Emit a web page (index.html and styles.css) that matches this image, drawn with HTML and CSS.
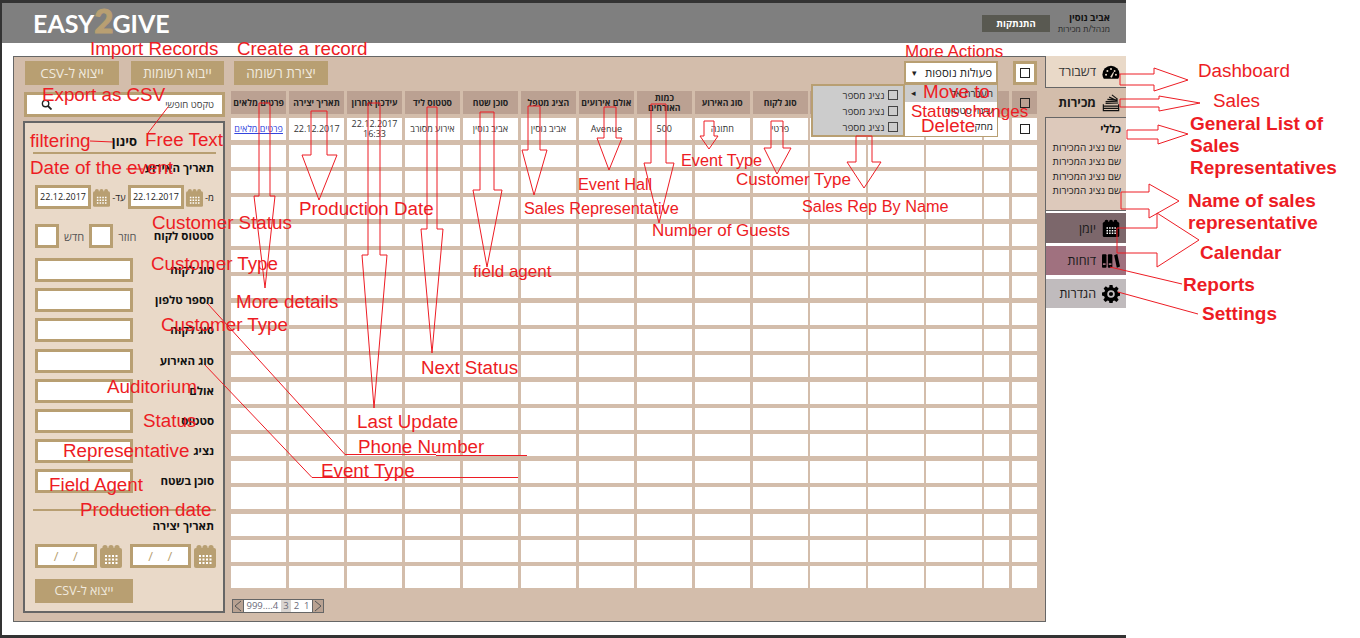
FILE: index.html
```html
<!DOCTYPE html>
<html lang="he">
<head>
<meta charset="utf-8">
<title>Easy2Give</title>
<link rel="stylesheet" href="styles.css">
</head>
<body>
<svg width="0" height="0" class="defs">
  <symbol id="cal" viewBox="0 0 22 24">
    <path d="M2 4h18a2 2 0 0 1 2 2v16a2 2 0 0 1-2 2H2a2 2 0 0 1-2-2V6a2 2 0 0 1 2-2z"/>
    <circle cx="5" cy="3.500" r="2.600"/><circle cx="11" cy="3.500" r="2.600"/><circle cx="17" cy="3.500" r="2.600"/>
    <path class="dots" d="M5 11h2v2H5zM8.500 11h2v2h-2zM12 11h2v2h-2zM15.500 11h2v2h-2zM5 14.500h2v2H5zM8.500 14.500h2v2h-2zM12 14.500h2v2h-2zM15.500 14.500h2v2h-2zM5 18h2v2H5zM8.500 18h2v2h-2zM12 18h2v2h-2zM15.500 18h2v2h-2z"/>
  </symbol>
</svg>

<div class="frame" dir="rtl">
  <header class="topbar">
    <div class="user">
      <b>אביב נוסין</b>
      <span>מנהל/ת מכירות</span>
    </div>
    <a class="logout">התנתקות</a>
    <div class="logo" dir="ltr">EASY<em>2</em>GIVE</div>
  </header>

  <div class="main">
    <nav class="nav">
      <a class="tab tab-dash">
        <svg class="tab-icon" viewBox="0 0 20 16"><path d="M10 1a9.500 9.500 0 0 0-9.500 9.500c0 2 .6 3.700 1.500 5h16c.9-1.300 1.500-3 1.500-5A9.500 9.500 0 0 0 10 1z"/><g fill="#e9d9c8"><circle cx="4.500" cy="11" r="1.100"/><circle cx="6" cy="6.800" r="1.100"/><circle cx="10" cy="4.600" r="1.100"/><circle cx="14" cy="6.800" r="1.100"/><circle cx="15.500" cy="11" r="1.100"/><path d="M9 13.500 12.500 8l.8.500L11 14.500z"/></g></svg>
        <span>דשבורד</span>
      </a>
      <a class="tab tab-sales">
        <svg class="tab-icon" viewBox="0 0 20 20" fill="none" stroke="#111" stroke-width="1.300"><path d="M1.500 11.500v7h17v-7M1.500 13.500h17M1.500 16h17"/><path d="M4 10.500 18 10M4 8.500 17.500 8M6 6 17 6.500M8 3.500l9 4M11 1l6.500 5"/></svg>
        <span>מכירות</span>
      </a>
      <div class="sublist">
        <b>כללי</b>
        <a>שם נציג המכירות</a>
        <a>שם נציג המכירות</a>
        <a>שם נציג המכירות</a>
        <a>שם נציג המכירות</a>
      </div>
      <a class="tab tab-cal">
        <svg class="tab-icon"><use href="#cal"/></svg>
        <span>יומן</span>
      </a>
      <a class="tab tab-rep">
        <svg class="tab-icon" viewBox="0 0 20 17"><rect x="0" y="1" width="5" height="15" rx="1"/><rect x="6.500" y="1" width="5" height="15" rx="1"/><path d="m13.500 2 3.500-1.300 3 14-3.500 1.300z"/><path d="M1 11h3v2H1zM7.500 11h3v2h-3z" fill="#a0717f"/></svg>
        <span>דוחות</span>
      </a>
      <a class="tab tab-set">
        <svg class="tab-icon" viewBox="0 0 20 20"><path fill-rule="evenodd" d="M8.300 0h3.400l.5 2.700 1.600.7 2.300-1.600 2.400 2.400-1.600 2.300.7 1.600 2.700.5v3.400l-2.700.5-.7 1.600 1.600 2.300-2.400 2.400-2.300-1.600-1.600.7-.5 2.700H8.300l-.5-2.700-1.600-.7-2.300 1.600-2.400-2.400 1.600-2.300-.7-1.600L0 11.700V8.300l2.700-.5.700-1.600-1.600-2.300 2.400-2.400 2.300 1.600 1.600-.7zM10 5.800a4.200 4.200 0 1 0 0 8.400 4.200 4.200 0 0 0 0-8.400z"/><circle cx="10" cy="10" r="2.300"/></svg>
        <span>הגדרות</span>
      </a>
    </nav>

    <section class="panel">
      <div class="toolbar">
        <div class="actions">
          <span class="check-box"><i class="check"></i></span>
          <div class="more">
            <div class="more-head"><span>פעולות נוספות</span><i class="caret">▾</i></div>
            <div class="more-menu">
              <div class="menu-item active"><span>העברה אל</span><i class="caret">◂</i></div>
              <div class="menu-item"><span>שינוי סטטוס</span></div>
              <div class="menu-item"><span>מחק</span></div>
              <div class="flyout">
                <label><i class="check"></i>נציג מספר</label>
                <label><i class="check"></i>נציג מספר</label>
                <label><i class="check"></i>נציג מספר</label>
              </div>
            </div>
          </div>
        </div>
        <div class="buttons">
          <a class="btn btn-new">יצירת רשומה</a>
          <a class="btn btn-import">ייבוא רשומות</a>
          <a class="btn">ייצוא ל-CSV</a>
        </div>
      </div>

      <div class="content">
        <div class="records">
          <div class="grid">
            <div class="th"><i class="check"></i></div>
            <div class="th"></div><div class="th"></div><div class="th"></div><div class="th"></div>
            <div class="th">סוג לקוח</div>
            <div class="th">סוג האירוע</div>
            <div class="th">כמות<br>האורחים</div>
            <div class="th">אולם אירועים</div>
            <div class="th">הציג מטפל</div>
            <div class="th">סוכן שטח</div>
            <div class="th">סטטוס ליד</div>
            <div class="th">עידכון אחרון</div>
            <div class="th">תאריך יצירה</div>
            <div class="th">פרטים מלאים</div>

            <div class="td"><i class="check"></i></div>
            <div class="td"></div><div class="td"></div><div class="td"></div><div class="td"></div>
            <div class="td">פרטי</div>
            <div class="td">חתונה</div>
            <div class="td">500</div>
            <div class="td">Avenue</div>
            <div class="td">אביב נוסין</div>
            <div class="td">אביב נוסין</div>
            <div class="td">אירוע מסורב</div>
            <div class="td">22.12.2017<br>16:33</div>
            <div class="td">22.12.2017</div>
            <div class="td"><a class="link">פרטים מלאים</a></div>

            <div class="td"></div><div class="td"></div><div class="td"></div><div class="td"></div><div class="td"></div><div class="td"></div><div class="td"></div><div class="td"></div><div class="td"></div><div class="td"></div><div class="td"></div><div class="td"></div><div class="td"></div><div class="td"></div><div class="td"></div>
            <div class="td"></div><div class="td"></div><div class="td"></div><div class="td"></div><div class="td"></div><div class="td"></div><div class="td"></div><div class="td"></div><div class="td"></div><div class="td"></div><div class="td"></div><div class="td"></div><div class="td"></div><div class="td"></div><div class="td"></div>
            <div class="td"></div><div class="td"></div><div class="td"></div><div class="td"></div><div class="td"></div><div class="td"></div><div class="td"></div><div class="td"></div><div class="td"></div><div class="td"></div><div class="td"></div><div class="td"></div><div class="td"></div><div class="td"></div><div class="td"></div>
            <div class="td"></div><div class="td"></div><div class="td"></div><div class="td"></div><div class="td"></div><div class="td"></div><div class="td"></div><div class="td"></div><div class="td"></div><div class="td"></div><div class="td"></div><div class="td"></div><div class="td"></div><div class="td"></div><div class="td"></div>
            <div class="td"></div><div class="td"></div><div class="td"></div><div class="td"></div><div class="td"></div><div class="td"></div><div class="td"></div><div class="td"></div><div class="td"></div><div class="td"></div><div class="td"></div><div class="td"></div><div class="td"></div><div class="td"></div><div class="td"></div>
            <div class="td"></div><div class="td"></div><div class="td"></div><div class="td"></div><div class="td"></div><div class="td"></div><div class="td"></div><div class="td"></div><div class="td"></div><div class="td"></div><div class="td"></div><div class="td"></div><div class="td"></div><div class="td"></div><div class="td"></div>
            <div class="td"></div><div class="td"></div><div class="td"></div><div class="td"></div><div class="td"></div><div class="td"></div><div class="td"></div><div class="td"></div><div class="td"></div><div class="td"></div><div class="td"></div><div class="td"></div><div class="td"></div><div class="td"></div><div class="td"></div>
            <div class="td"></div><div class="td"></div><div class="td"></div><div class="td"></div><div class="td"></div><div class="td"></div><div class="td"></div><div class="td"></div><div class="td"></div><div class="td"></div><div class="td"></div><div class="td"></div><div class="td"></div><div class="td"></div><div class="td"></div>
            <div class="td"></div><div class="td"></div><div class="td"></div><div class="td"></div><div class="td"></div><div class="td"></div><div class="td"></div><div class="td"></div><div class="td"></div><div class="td"></div><div class="td"></div><div class="td"></div><div class="td"></div><div class="td"></div><div class="td"></div>
            <div class="td"></div><div class="td"></div><div class="td"></div><div class="td"></div><div class="td"></div><div class="td"></div><div class="td"></div><div class="td"></div><div class="td"></div><div class="td"></div><div class="td"></div><div class="td"></div><div class="td"></div><div class="td"></div><div class="td"></div>
            <div class="td"></div><div class="td"></div><div class="td"></div><div class="td"></div><div class="td"></div><div class="td"></div><div class="td"></div><div class="td"></div><div class="td"></div><div class="td"></div><div class="td"></div><div class="td"></div><div class="td"></div><div class="td"></div><div class="td"></div>
            <div class="td"></div><div class="td"></div><div class="td"></div><div class="td"></div><div class="td"></div><div class="td"></div><div class="td"></div><div class="td"></div><div class="td"></div><div class="td"></div><div class="td"></div><div class="td"></div><div class="td"></div><div class="td"></div><div class="td"></div>
            <div class="td"></div><div class="td"></div><div class="td"></div><div class="td"></div><div class="td"></div><div class="td"></div><div class="td"></div><div class="td"></div><div class="td"></div><div class="td"></div><div class="td"></div><div class="td"></div><div class="td"></div><div class="td"></div><div class="td"></div>
            <div class="td"></div><div class="td"></div><div class="td"></div><div class="td"></div><div class="td"></div><div class="td"></div><div class="td"></div><div class="td"></div><div class="td"></div><div class="td"></div><div class="td"></div><div class="td"></div><div class="td"></div><div class="td"></div><div class="td"></div>
            <div class="td"></div><div class="td"></div><div class="td"></div><div class="td"></div><div class="td"></div><div class="td"></div><div class="td"></div><div class="td"></div><div class="td"></div><div class="td"></div><div class="td"></div><div class="td"></div><div class="td"></div><div class="td"></div><div class="td"></div>
            <div class="td"></div><div class="td"></div><div class="td"></div><div class="td"></div><div class="td"></div><div class="td"></div><div class="td"></div><div class="td"></div><div class="td"></div><div class="td"></div><div class="td"></div><div class="td"></div><div class="td"></div><div class="td"></div><div class="td"></div>
            <div class="td"></div><div class="td"></div><div class="td"></div><div class="td"></div><div class="td"></div><div class="td"></div><div class="td"></div><div class="td"></div><div class="td"></div><div class="td"></div><div class="td"></div><div class="td"></div><div class="td"></div><div class="td"></div><div class="td"></div>
          </div>
          <div class="pager">
            <span class="pg-arrow"><svg viewBox="0 0 10 12" fill="none" stroke="#555"><path d="m2 1 6 5-6 5"/></svg></span>
            <span class="pg-nums"><span>1</span><span>2</span><span class="cur">3</span><span dir="ltr">999....4</span></span>
            <span class="pg-arrow"><svg viewBox="0 0 10 12" fill="none" stroke="#555"><path d="M8 1 2 6l6 5"/></svg></span>
          </div>
        </div>

        <aside class="side">
          <div class="search">
            <span>טקסט חופשי</span>
            <svg class="mag" viewBox="0 0 12 12" fill="none" stroke="#222" stroke-width="1.500"><circle cx="5" cy="5" r="3.500"/><path d="m7.500 7.500 4 4" stroke-width="2"/></svg>
          </div>
          <div class="filter">
            <h3>סינון</h3>
            <h4>תאריך האירוע</h4>
            <div class="dates">
              <span>מ-</span>
              <svg class="cal-icon"><use href="#cal"/></svg>
              <span class="input date">22.12.2017</span>
              <span>עד-</span>
              <svg class="cal-icon"><use href="#cal"/></svg>
              <span class="input date">22.12.2017</span>
            </div>
            <div class="status-row">
              <h4>סטטוס לקוח</h4>
              <span class="opt">חוזר</span><span class="input tick"></span>
              <span class="opt">חדש</span><span class="input tick"></span>
            </div>
            <div class="field"><h4>סוג לקוח</h4><span class="input"></span></div>
            <div class="field"><h4>מספר טלפון</h4><span class="input"></span></div>
            <div class="field"><h4>סוג לקוח</h4><span class="input"></span></div>
            <div class="field"><h4>סוג האירוע</h4><span class="input"></span></div>
            <div class="field"><h4>אולם</h4><span class="input"></span></div>
            <div class="field"><h4>סטטוס</h4><span class="input"></span></div>
            <div class="field"><h4>נציג</h4><span class="input"></span></div>
            <div class="field"><h4>סוכן בשטח</h4><span class="input"></span></div>
            <div class="rule"></div>
            <h4 class="made">תאריך יצירה</h4>
            <div class="made-dates">
              <svg class="cal-icon"><use href="#cal"/></svg>
              <span class="input blank">/ /</span>
              <svg class="cal-icon"><use href="#cal"/></svg>
              <span class="input blank">/ /</span>
            </div>
            <a class="btn btn-csv">ייצוא ל-CSV</a>
          </div>
        </aside>
      </div>
    </section>
  </div>
</div>

<!-- red notes drawn on top of the screenshot -->
<svg class="notes" width="1360" height="638" viewBox="0 0 1360 638">
  <g class="marks">
    <polygon points="1120,74 1154,74 1154,68 1188,80 1154,91 1154,85 1120,85"/>
    <polygon points="1120,99 1159,99 1159,96 1200,103 1159,111 1159,107 1120,107"/>
    <polygon points="1127,130 1158,130 1158,125 1188,134 1158,144 1158,139 1127,139"/>
    <polygon points="1121,192 1149,192 1149,184 1179,201 1149,218 1149,209 1121,209"/>
    <polygon points="1117,228 1157,228 1157,213 1199,240 1157,267 1157,253 1117,253"/>
    <polyline points="1110,267 1182,284"/>
    <polyline points="1118,292 1198,314"/>
    <polygon points="311,111 327,111 327,155 337,155 319,200 302,155 311,155"/>
    <polygon points="259,103 270,103 270,196 275,196 265,288 254,196 259,196"/>
    <polygon points="368,103 380,103 380,255 387,255 374,408 362,255 368,255"/>
    <polygon points="427,107 437,107 437,229 443,229 432,353 421,229 427,229"/>
    <polygon points="480,112 494,112 494,190 502,190 487,267 473,190 480,190"/>
    <polygon points="528,106 540,106 540,150 547,150 534,195 522,150 528,150"/>
    <polygon points="604,107 616,107 616,138 622,138 609,170 597,138 604,138"/>
    <polygon points="651,104 666,104 666,163 674,163 659,223 644,163 651,163"/>
    <polygon points="704,121 714,121 714,136 718,136 709,149 700,136 704,136"/>
    <polygon points="771,121 783,121 783,148 791,148 777,174 764,148 771,148"/>
    <polygon points="856,136 872,136 872,162 881,162 864,188 847,162 856,162"/>
    <polyline points="90,141 113,142"/>
    <polyline points="168,107 148,133"/>
    <polyline points="126,169 143,169"/>
    <polyline points="208,304 345,454.500 436,454.500"/>
    <polyline points="436,455.500 527,455.500"/>
    <polyline points="205,365 312,477.500 518,477.500"/>
  </g>
  <g class="note">
    <text x="90" y="55">Import Records</text>
    <text x="237" y="55">Create a record</text>
    <text x="42" y="101">Export as CSV</text>
    <text x="30" y="147">filtering</text>
    <text x="145" y="146">Free Text</text>
    <text x="30" y="174">Date of the event</text>
    <text x="299" y="215">Production Date</text>
    <text x="152" y="229">Customer Status</text>
    <text x="151" y="270">Customer Type</text>
    <text x="236" y="308">More details</text>
    <text x="161" y="331">Customer Type</text>
    <text x="421" y="374">Next Status</text>
    <text x="107" y="393">Auditorium</text>
    <text x="143" y="427">Status</text>
    <text x="63" y="457">Representative</text>
    <text x="357" y="428">Last Update</text>
    <text x="358" y="453">Phone Number</text>
    <text x="321" y="477">Event Type</text>
    <text x="49" y="491">Field Agent</text>
    <text x="80" y="516">Production date</text>
    <text x="923" y="98">Move to</text>
    <text x="921" y="132">Delete</text>
    <text x="1198" y="77">Dashboard</text>
    <text x="1213" y="107">Sales</text>
  </g>
  <g class="note note-mid">
    <text x="905" y="57">More Actions</text>
    <text x="911" y="117">Status changes</text>
    <text x="473" y="277">field agent</text>
    <text x="652" y="236">Number of Guests</text>
    <text x="736" y="185">Customer Type</text>
  </g>
  <g class="note note-sm">
    <text x="578" y="190">Event Hall</text>
    <text x="524" y="214">Sales Representative</text>
    <text x="681" y="166">Event Type</text>
    <text x="802" y="212">Sales Rep By Name</text>
  </g>
  <g class="note note-bold">
    <text x="1190" y="130">General List of</text>
    <text x="1190" y="152">Sales</text>
    <text x="1190" y="174">Representatives</text>
    <text x="1188" y="207">Name of sales</text>
    <text x="1188" y="229">representative</text>
    <text x="1200" y="259">Calendar</text>
    <text x="1183" y="291">Reports</text>
    <text x="1202" y="320">Settings</text>
  </g>
</svg>
</body>
</html>
```

FILE: styles.css
```css
html,body{
    margin:0;
    padding:0;
    background:#fff;
}
body{
    position:relative;
    width:1360px;
    height:638px;
    overflow:hidden;
    font-family:"Open Sans","Liberation Sans",sans-serif;
    font-size:10px;
    color:#222;
}
a{
    text-decoration:none;
    color:inherit;
}
h3,h4{
    margin:0;
}
.defs{
    position:absolute;
}
.dots{
    fill:#fff;
}

.frame{
    box-sizing:border-box;
    width:1126px;
    height:638px;
    border-top:3px solid #333;
    border-bottom:3px solid #333;
    border-left:2px solid #333;
}

/* header */
.topbar{
    display:flex;
    align-items:center;
    height:40px;
    background:#7f7f7f;
    padding-right:16px;
}
.user{
    display:flex;
    flex-direction:column;
    width:50px;
    white-space:nowrap;
    color:#2a2a2a;
    line-height:11px;
    margin-left:10px;
    font-size:8.500px;
}
.user b{
    font-size:9.500px;
    color:#111;
}
.logout{
    background:#595951;
    color:#fff;
    font-weight:bold;
    font-size:9.500px;
    width:68px;
    height:17px;
    line-height:17px;
    text-align:center;
}
.logo{
    margin-right:auto;
    margin-left:31px;
    font-family:"Lato","Open Sans",sans-serif;
    font-weight:bold;
    font-size:25px;
    color:#fff;
    line-height:40px;
}
.logo em{
    font-style:normal;
    font-weight:900;
    color:#b89f72;
    font-size:33px;
    line-height:20px;
    letter-spacing:-1px;
    -webkit-text-stroke:1px #b89f72;
}

/* layout */
.main{
    display:flex;
    padding-top:13px;
}
.nav{
    width:80px;
    flex:none;
}
.panel{
    box-sizing:border-box;
    width:1033px;
    height:566px;
    border:1px solid #666;
    background:#d3bdab;
    padding:4px 8px 0 10px;
}

/* right nav */
.tab{
    display:flex;
    align-items:center;
    gap:6px;
    padding-right:6px;
    font-size:12.500px;
    color:#1a1a1a;
    box-sizing:border-box;
}
.tab-icon{
    width:18px;
    height:18px;
    flex:none;
}
.tab-dash{
    height:32px;
    background:#e9d9c8;
    border-bottom:1px solid #666;
    color:#333;
}
.tab-sales{
    height:29px;
    background:#d3bdab;
    margin-left:-1px;
    width:81px;
    position:relative;
    font-weight:bold;
}
.sublist{
    box-sizing:border-box;
    height:94px;
    background:#ddc9bb;
    border-top:1px solid #666;
    border-bottom:1px solid #666;
    padding:3px 5px 0 0;
    display:flex;
    flex-direction:column;
    line-height:14.500px;
    font-size:10px;
}
.sublist b{
    color:#111;
    font-size:11px;
    margin-bottom:3px;
    margin-top:1px;
}
.tab-cal{
    height:30px;
    margin-top:2px;
    background:#7c676b;
}
.tab-rep{
    height:29px;
    margin-top:3px;
    background:#a0717f;
}
.tab-set{
    height:29px;
    margin-top:4px;
    background:#c0bbbd;
}

/* toolbar */
.toolbar{
    display:flex;
    justify-content:space-between;
    height:24px;
}
.actions{
    display:flex;
    gap:15px;
}
.check-box{
    box-sizing:border-box;
    width:24px;
    height:24px;
    border:3px solid #b89f72;
    background:#fff;
    display:flex;
    align-items:center;
    justify-content:center;
}
.check{
    display:inline-block;
    box-sizing:border-box;
    width:10px;
    height:10px;
    border:1.500px solid #222;
    background:transparent;
}
.more{
    position:relative;
    width:94px;
}
.more-head{
    box-sizing:border-box;
    height:23px;
    background:#fff;
    border:2px solid #b89f72;
    display:flex;
    justify-content:space-between;
    align-items:center;
    padding:0 4px 0 6px;
    font-size:11.500px;
    color:#222;
}
.caret{
    font-style:normal;
    font-size:9px;
    color:#222;
}
.more-menu{
    position:absolute;
    top:23px;
    right:0;
    width:94px;
    height:53px;
    box-sizing:border-box;
    background:#fff;
    border:1.500px solid #b89f72;
}
.menu-item{
    display:flex;
    justify-content:space-between;
    height:16.500px;
    line-height:16.500px;
    padding:0 4px 0 6px;
    font-size:10px;
}
.menu-item.active{
    background:#ccc;
}
.flyout{
    position:absolute;
    top:-1.500px;
    right:92.500px;
    width:94px;
    height:53px;
    box-sizing:border-box;
    background:#ccc;
    border:2px solid #b89f72;
    padding:1px 5px 0 0;
    display:flex;
    flex-direction:column;
}
.flyout label{
    display:flex;
    align-items:center;
    gap:3px;
    height:16.500px;
    font-size:10px;
    color:#333;
}
.flyout .check{
    border-color:#444;
}
.buttons{
    display:flex;
    gap:10px;
    margin-left:1px;
}
.btn{
    display:block;
    width:94px;
    height:24px;
    background:#b89f72;
    color:#f1eadf;
    text-align:center;
    font-size:13.500px;
    line-height:24px;
}
.btn-import{
    width:93px;
    margin-left:2px;
}

/* table area */
.content{
    display:flex;
    margin-top:6px;
    gap:6px;
}
.records{
    width:806px;
}
.grid{
    display:grid;
    grid-template-columns:25px 25px repeat(13,1fr);
    grid-template-rows:23px repeat(18,22px);
    gap:4.350px 2.700px;
}
.th{
    background:#bba192;
    font-weight:bold;
    font-size:8.700px;
    line-height:10px;
    color:#222;
    display:flex;
    align-items:center;
    justify-content:center;
    text-align:center;
}
.td{
    background:#fff;
    font-size:9px;
    line-height:10px;
    color:#333;
    display:flex;
    align-items:center;
    justify-content:center;
    text-align:center;
}
.link{
    color:#3344dd;
    text-decoration:underline;
}
.pager{
    display:flex;
    width:92px;
    margin-top:11px;
    margin-right:auto;
    margin-left:1px;
    height:14px;
    box-sizing:border-box;
    border:1px solid #666;
    font-size:9.500px;
    line-height:12px;
    color:#6a6a78;
}
.pg-arrow{
    width:10px;
    flex:none;
    background:#b9a292;
}
.pg-arrow svg{
    display:block;
    width:10px;
    height:12px;
}
.pg-nums{
    flex:1;
    min-width:0;
    background:#fff;
    display:flex;
    border-left:1px solid #666;
    border-right:1px solid #666;
}
.pg-nums span{
    padding:0 2.500px;
}
.pg-nums .cur{
    background:#d9d4d0;
}

/* filter column */
.side{
    width:201px;
    flex:none;
}
.search{
    box-sizing:border-box;
    height:25px;
    margin-top:1px;
    background:#fff;
    border:3px solid #b89f72;
    display:flex;
    justify-content:space-between;
    align-items:center;
    padding:0 8px 0 14px;
    font-size:9.500px;
    color:#444;
}
.mag{
    width:11px;
    height:11px;
}
.filter{
    box-sizing:border-box;
    height:492px;
    margin-top:4px;
    margin-left:-1px;
    background:#e9d9c8;
    border:2px solid #666;
    padding:8px 9px 0 8px;
}
.filter h3{
    font-size:13px;
    line-height:20px;
    color:#111;
    margin-right:-2px;
    padding-right:79px;
    padding-bottom:1px;
    border-bottom:2px solid #b89f72;
}
.filter h4{
    font-size:11.500px;
    line-height:16px;
    color:#111;
    flex:1;
}
.filter h3 + h4{
    margin-top:6px;
}
.dates{
    display:flex;
    align-items:center;
    justify-content:space-between;
    margin-top:9px;
    padding-left:2px;
    font-size:9.500px;
}
.input{
    display:block;
    box-sizing:border-box;
    width:98px;
    height:24px;
    background:#fff;
    border:3px solid #b89f72;
    flex:none;
}
.date{
    width:56px;
    text-align:center;
    line-height:18px;
    font-size:9px;
    color:#222;
}
.cal-icon{
    width:17px;
    height:19px;
    fill:#b89f72;
    flex:none;
}
.status-row{
    display:flex;
    align-items:center;
    margin-top:15px;
    padding-left:2px;
    font-size:11px;
    color:#555;
}
.opt{
    margin-left:5px;
    margin-right:5px;
}
.tick{
    width:24px;
}
.field{
    display:flex;
    align-items:center;
    height:24px;
    margin-top:6.200px;
    padding-left:2px;
}
.status-row + .field{
    margin-top:10px;
}
.rule{
    height:2px;
    margin:16px -2px 0 0;
    background:#b89f72;
}
.made{
    margin-top:7px;
}
.made-dates{
    display:flex;
    align-items:center;
    margin:10px -2px 0 0;
}
.made-dates .cal-icon{
    width:22px;
    height:24px;
}
.blank{
    width:61.500px;
    margin:0 3px 0 8px;
    color:#b89f72;
    font-size:13px;
    line-height:18px;
    text-align:center;
    word-spacing:11px;
}
.btn-csv{
    width:98px;
    margin-top:11px;
    margin-right:auto;
    margin-left:2px;
    font-size:12.500px;
}

/* annotations over the page */
.notes{
    position:absolute;
    left:0;
    top:0;
    pointer-events:none;
}
.marks polygon,.marks polyline{
    fill:none;
    stroke:#ed1c24;
    stroke-width:1;
}
.note text{
    font-family:"Liberation Sans",Arial,sans-serif;
    font-size:18.800px;
    fill:#ed1c24;
}
.note-mid text{
    font-size:17px;
}
.note-sm text{
    font-size:16.300px;
}
.note-bold text{
    font-size:19px;
    font-weight:bold;
}
```
